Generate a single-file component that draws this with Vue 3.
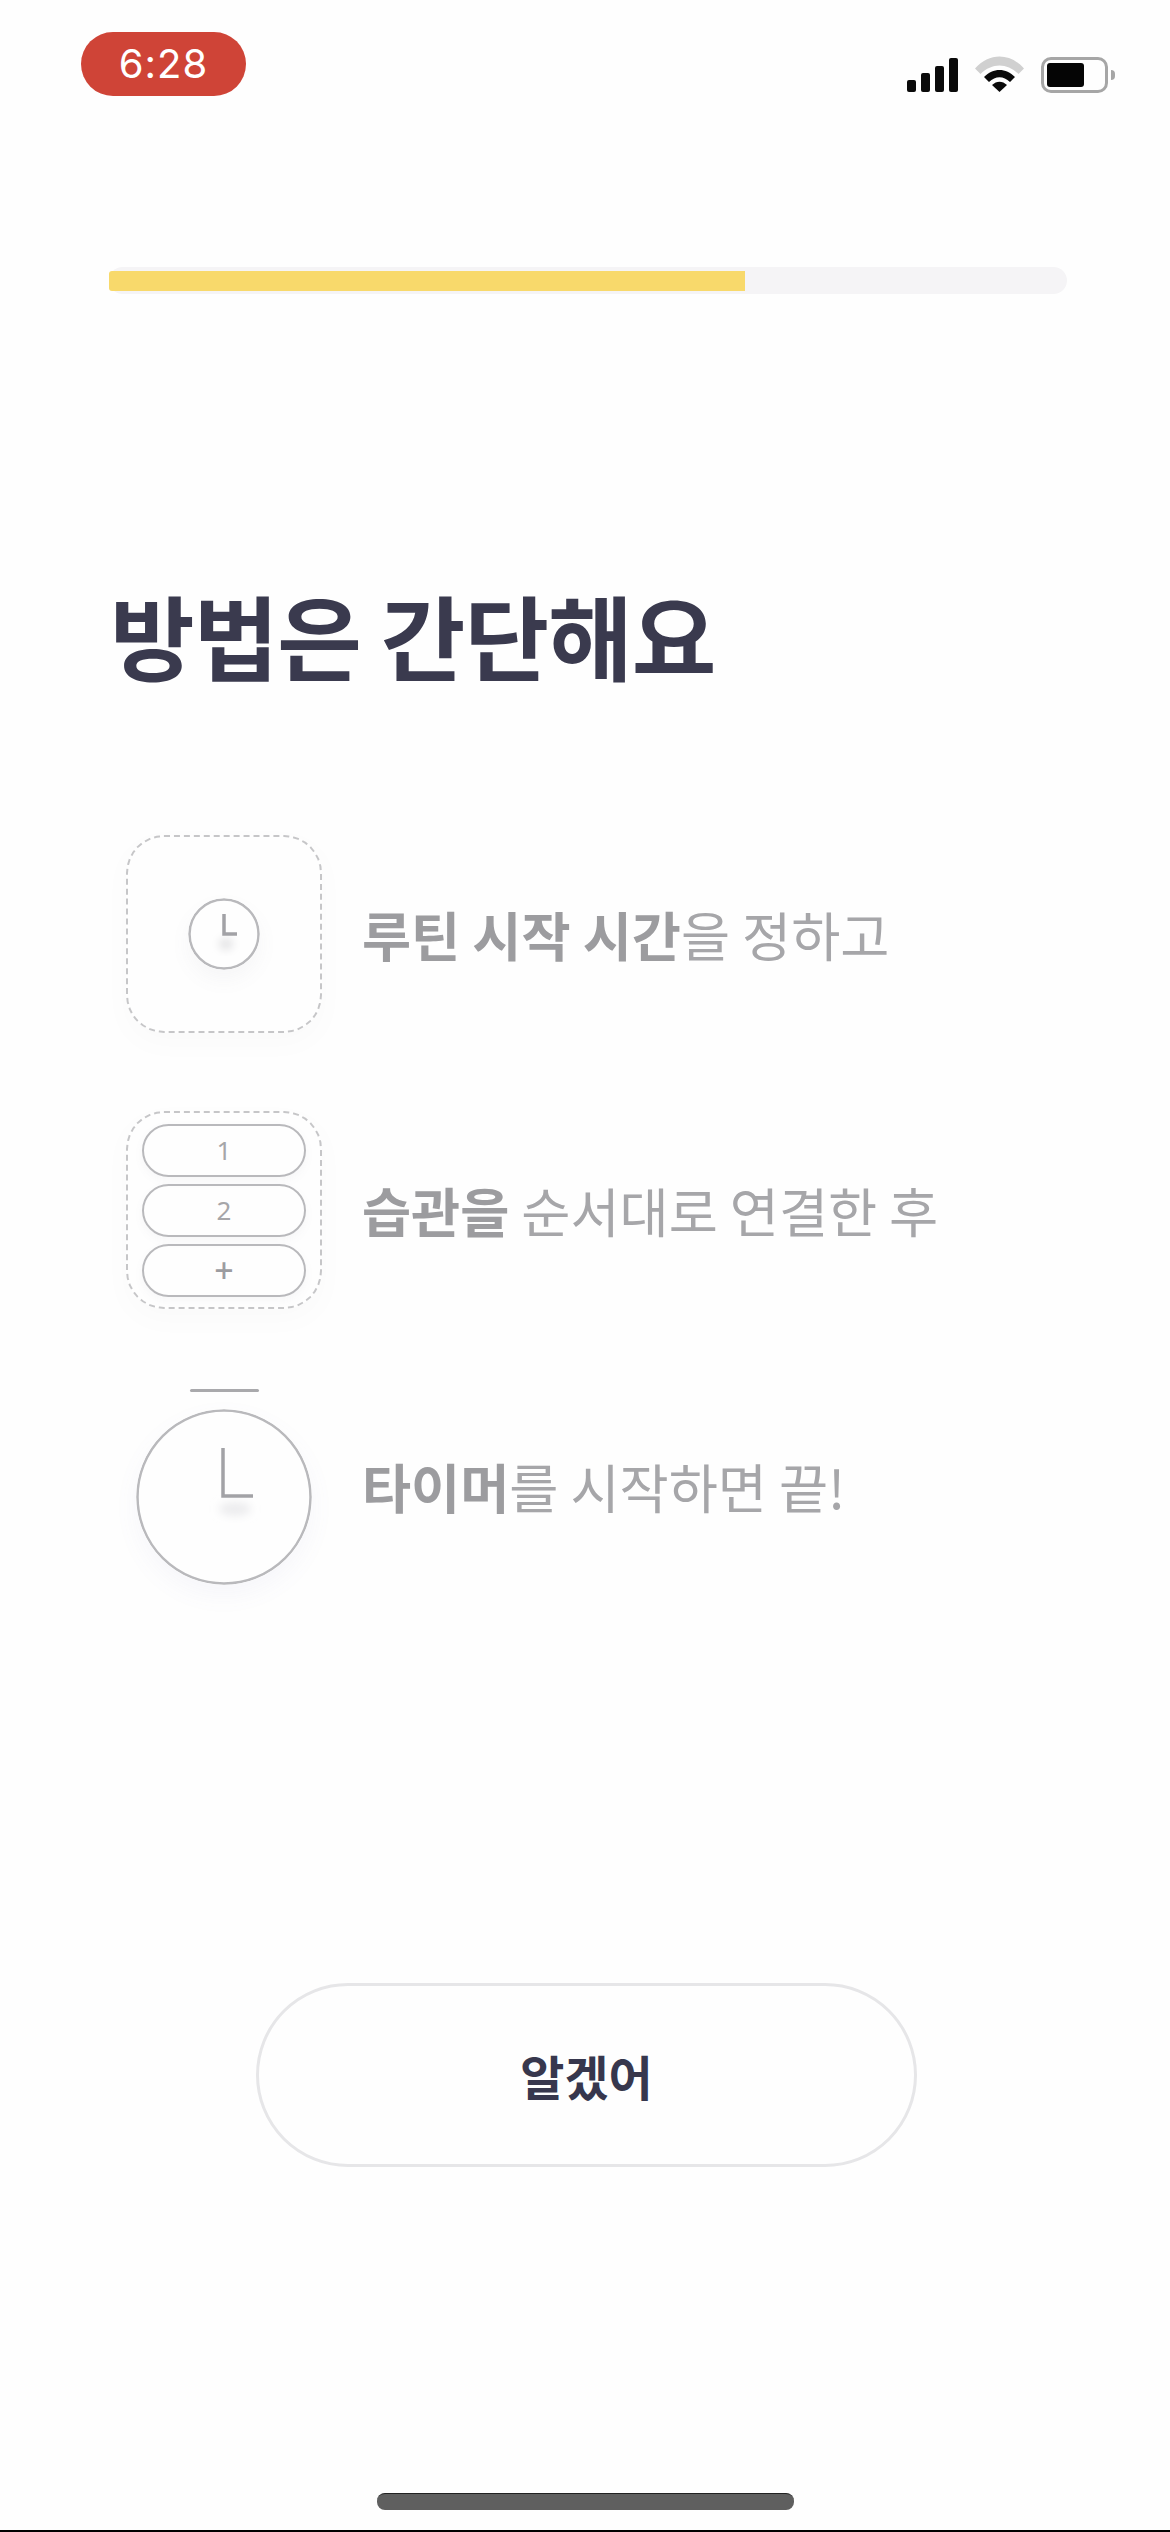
<template>
  <div class="page">
    <!-- status bar -->
    <div class="status-bar">
      <div class="time-pill">6:28</div>
      <div class="status-icons">
        <svg class="signal" viewBox="0 0 51 34" width="51" height="34">
          <rect x="0" y="22" width="9" height="12" rx="2" />
          <rect x="14" y="15" width="9" height="19" rx="2" />
          <rect x="28" y="8" width="9" height="26" rx="2" />
          <rect x="42" y="0" width="9" height="34" rx="2" />
        </svg>
        <svg class="wifi" viewBox="0 0 49 36" width="49" height="36">
          <path d="M0 12.5 C14 -3.5 35 -3.5 49 12.5 L43.5 18 C32 6.5 17 6.5 5.5 18 Z" fill="#d0d0d0" />
          <path d="M9 21 C18 11.5 31 11.5 40 21 L35 26 C28.5 19.5 20.5 19.5 14 26 Z" fill="#0a0a0a" />
          <path d="M17 29 C21.5 24.5 27.5 24.5 32 29 L24.5 36 Z" fill="#0a0a0a" />
        </svg>
        <div class="battery">
          <div class="battery-body"><div class="battery-level"></div></div>
          <div class="battery-nub"></div>
        </div>
      </div>
    </div>

    <!-- progress -->
    <div class="progress">
      <div class="progress-fill" :style="{ width: progress + '%' }"></div>
    </div>

    <h1 class="title">방법은 간단해요</h1>

    <div class="steps">
      <div class="step">
        <div class="step-icon dashed">
          <svg class="clock small" viewBox="0 0 72 72" width="72" height="72">
            <defs>
              <filter id="soft" x="-50%" y="-50%" width="200%" height="200%">
                <feGaussianBlur stdDeviation="4" />
              </filter>
            </defs>
            <ellipse cx="38" cy="46" rx="7" ry="6" fill="#e2e2e4" filter="url(#soft)" />
            <circle cx="36" cy="36" r="34.5" fill="none" stroke="#b9b9bc" stroke-width="2.5" />
            <path d="M36 16 V36 H49" fill="none" stroke="#a2a2a6" stroke-width="3.5" />
          </svg>
        </div>
        <p class="step-text"><b>루틴 시작 시간</b>을 정하고</p>
      </div>

      <div class="step">
        <div class="step-icon dashed list">
          <div v-for="item in listItems" :key="item" class="list-pill">{{ item }}</div>
        </div>
        <p class="step-text"><b>습관을</b> 순서대로 연결한 후</p>
      </div>

      <div class="step">
        <div class="step-icon timer">
          <div class="timer-cap"></div>
          <svg class="clock big" viewBox="0 0 176 176" width="176" height="176">
            <ellipse cx="99" cy="100" rx="16" ry="7" fill="#ececee" filter="url(#soft)" />
            <circle cx="88" cy="88" r="86.5" fill="none" stroke="#b9b9bc" stroke-width="2.5" />
            <path d="M87 39 V87 H117" fill="none" stroke="#a2a2a6" stroke-width="3.5" />
          </svg>
        </div>
        <p class="step-text"><b>타이머</b>를 시작하면 끝!</p>
      </div>
    </div>

    <button class="ok-btn">알겠어</button>

    <div class="home-bar"></div>
    <div class="bottom-line"></div>
  </div>
</template>

<script setup>
const progress = 66.4
const listItems = ['1', '2', '+']
</script>

<style>
html,
body {
  margin: 0;
  background: #fefefe;
}
</style>

<style scoped>
.page {
  width: 1170px;
  height: 2532px;
  box-sizing: border-box;
  display: flex;
  flex-direction: column;
  background: #fefefe;
  overflow: hidden;
  font-family: "Noto Sans CJK KR", "Noto Sans", sans-serif;
}

.status-bar {
  height: 64px;
  margin-top: 32px;
  padding: 0 55px 0 81px;
  display: flex;
  justify-content: space-between;
  align-items: flex-start;
}

.time-pill {
  width: 165px;
  height: 64px;
  border-radius: 32px;
  background: #cf4437;
  color: #fff;
  font-family: Inter, "Liberation Sans", sans-serif;
  font-size: 40px;
  line-height: 64px;
  text-align: center;
  letter-spacing: 1px;
}

.status-icons {
  display: flex;
  align-items: flex-start;
  margin-top: 25px;
}

.signal {
  margin-top: 1px;
  fill: #0a0a0a;
}

.wifi {
  margin-left: 17px;
  margin-top: -1px;
}

.battery {
  display: flex;
  align-items: center;
  margin-left: 17px;
}

.battery-body {
  width: 67px;
  height: 36px;
  box-sizing: border-box;
  border: 3px solid #a6a6a6;
  border-radius: 10px;
  padding: 3px;
}

.battery-level {
  width: 37px;
  height: 24px;
  background: #050505;
  border-radius: 3px;
}

.battery-nub {
  width: 4px;
  height: 10px;
  margin-left: 3px;
  background: #a6a6a6;
  border-radius: 0 4px 4px 0;
}

.progress {
  width: 958px;
  height: 27px;
  margin: 171px 0 0 109px;
  display: flex;
  align-items: center;
  background: #f5f4f6;
  border-radius: 14px;
}

.progress-fill {
  height: 20px;
  background: #f8d96b;
  border-radius: 3px 0 0 3px;
}

.title {
  margin: 278px 0 0 110px;
  font-size: 92px;
  line-height: 124px;
  font-weight: 700;
  color: #3a3a4e;
  letter-spacing: -1px;
}

.steps {
  margin: 139px 0 0 126px;
  display: flex;
  flex-direction: column;
  gap: 78px;
}

.step {
  height: 198px;
  display: flex;
  align-items: center;
  gap: 40px;
}

.step-icon {
  width: 196px;
  height: 198px;
  box-sizing: border-box;
  flex-shrink: 0;
  display: flex;
  flex-direction: column;
  align-items: center;
  justify-content: center;
}

.dashed {
  border: 2px dashed #c6c6c8;
  border-radius: 38px;
  box-shadow: 0 10px 24px rgba(120, 120, 140, 0.03);
}

.clock {
  display: block;
}

.clock.small {
  border-radius: 50%;
  box-shadow: 0 10px 20px rgba(120, 120, 130, 0.06);
}

.clock.big {
  margin-top: 17px;
  border-radius: 50%;
  box-shadow: 0 10px 24px rgba(120, 120, 180, 0.06);
}

.list {
  gap: 7px;
}

.list-pill {
  width: 164px;
  height: 53px;
  box-sizing: border-box;
  border: 2px solid #b9b9bc;
  border-radius: 27px;
  box-shadow: 0 4px 10px rgba(120, 120, 130, 0.05);
  color: #a6a6a9;
  font-family: "Noto Sans", sans-serif;
  font-size: 26px;
  line-height: 48px;
  text-align: center;
}

.list-pill:last-child {
  font-size: 34px;
  font-weight: 500;
  color: #9c9ca0;
}

.timer {
  justify-content: flex-start;
}

.timer-cap {
  width: 69px;
  height: 3px;
  margin-top: 2px;
  background: #a9a9ac;
  border-radius: 2px;
}

.step-text {
  margin: 0;
  font-size: 53.4px;
  line-height: 72px;
  color: #a6a6a9;
  font-weight: 400;
  white-space: nowrap;
}

.step-text b {
  font-weight: 700;
  color: #9c9c9f;
}

.ok-btn {
  width: 661px;
  height: 184px;
  margin: 398px 0 0 256px;
  box-sizing: border-box;
  border: 3px solid #e6e6e8;
  border-radius: 92px;
  background: #fefefe;
  color: #37374d;
  font-family: inherit;
  font-size: 48px;
  font-weight: 700;
}

.home-bar {
  width: 417px;
  height: 17px;
  margin: auto 0 20px 377px;
  background: #5f5f5f;
  border-top: 1px solid #222;
  box-sizing: border-box;
  border-radius: 8px;
}

.bottom-line {
  height: 2px;
  background: #000;
}
</style>
